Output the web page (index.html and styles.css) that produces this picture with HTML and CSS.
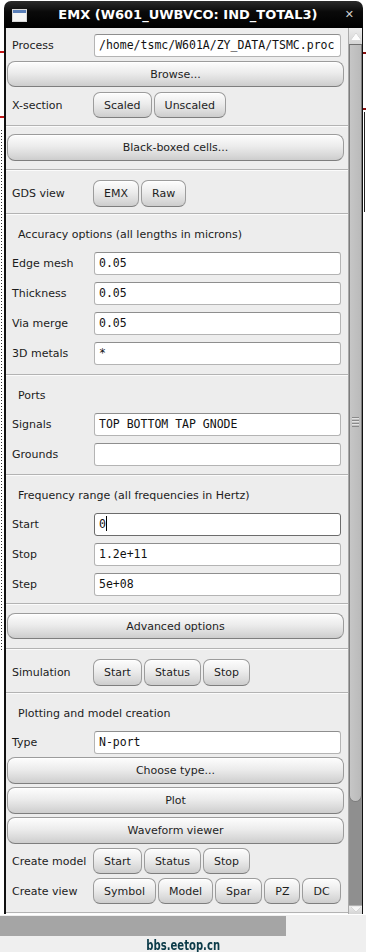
FILE: index.html
```html
<!DOCTYPE html>
<html lang="en">
<head>
    <meta charset="UTF-8">
    <meta name="viewport" content="width=device-width, initial-scale=1.0">
    <title>EMX (W601_UWBVCO: IND_TOTAL3)</title>
    <link rel="stylesheet" href="styles.css">
</head>
<body>

<div class="screen">

    <!-- EMX dialog -->
    <div class="window">
        <div class="titlebar">
            <svg class="win-icon" width="15" height="13" viewBox="0 0 15 13">
                <rect x="0.5" y="0.5" width="14" height="12" fill="#f4f4f4" stroke="#d8d8d8"/>
                <rect x="1" y="1" width="13" height="3" fill="#5a7fb8"/>
            </svg>
            <span class="title">EMX (W601_UWBVCO: IND_TOTAL3)</span>
            <span class="close">&#x2715;</span>
        </div>

        <div class="frame">
            <div class="content">

                <div class="row first">
                    <span class="label">Process</span>
                    <div class="field">/home/tsmc/W601A/ZY_DATA/TSMC.proc</div>
                </div>
                <button class="wide gap4">Browse...</button>
                <div class="row gap5">
                    <span class="label">X-section</span>
                    <div class="btns">
                        <button class="btn">Scaled</button>
                        <button class="btn">Unscaled</button>
                    </div>
                </div>

                <div class="sep s7"></div>
                <button class="wide tall gap8">Black-boxed cells...</button>
                <div class="sep s8"></div>

                <div class="row gap10">
                    <span class="label">GDS view</span>
                    <div class="btns">
                        <button class="btn tall">EMX</button>
                        <button class="btn tall">Raw</button>
                    </div>
                </div>

                <div class="sep s6"></div>
                <div class="heading">Accuracy options (all lengths in microns)</div>
                <div class="row gap7">
                    <span class="label">Edge mesh</span>
                    <div class="field">0.05</div>
                </div>
                <div class="row gap7">
                    <span class="label">Thickness</span>
                    <div class="field">0.05</div>
                </div>
                <div class="row gap7">
                    <span class="label">Via merge</span>
                    <div class="field">0.05</div>
                </div>
                <div class="row gap7">
                    <span class="label">3D metals</span>
                    <div class="field">*</div>
                </div>

                <div class="sep s9"></div>
                <div class="heading">Ports</div>
                <div class="row gap7">
                    <span class="label">Signals</span>
                    <div class="field">TOP BOTTOM TAP GNODE</div>
                </div>
                <div class="row gap7">
                    <span class="label">Grounds</span>
                    <div class="field"></div>
                </div>

                <div class="sep s8"></div>
                <div class="heading">Frequency range (all frequencies in Hertz)</div>
                <div class="row gap7">
                    <span class="label">Start</span>
                    <div class="field focused">0<span class="caret"></span></div>
                </div>
                <div class="row gap7">
                    <span class="label">Stop</span>
                    <div class="field">1.2e+11</div>
                </div>
                <div class="row gap7">
                    <span class="label">Step</span>
                    <div class="field">5e+08</div>
                </div>

                <div class="sep s7"></div>
                <button class="wide gap9">Advanced options</button>
                <div class="sep s9"></div>

                <div class="row gap10">
                    <span class="label">Simulation</span>
                    <div class="btns">
                        <button class="btn tall">Start</button>
                        <button class="btn tall">Status</button>
                        <button class="btn tall">Stop</button>
                    </div>
                </div>

                <div class="sep s6"></div>
                <div class="heading">Plotting and model creation</div>
                <div class="row gap7">
                    <span class="label">Type</span>
                    <div class="field">N-port</div>
                </div>
                <button class="wide tall gap3">Choose type...</button>
                <button class="wide tall gap3">Plot</button>
                <button class="wide tall gap3">Waveform viewer</button>

                <div class="row gap4">
                    <span class="label">Create model</span>
                    <div class="btns">
                        <button class="btn">Start</button>
                        <button class="btn">Status</button>
                        <button class="btn">Stop</button>
                    </div>
                </div>
                <div class="row gap4">
                    <span class="label">Create view</span>
                    <div class="btns">
                        <button class="btn">Symbol</button>
                        <button class="btn">Model</button>
                        <button class="btn">Spar</button>
                        <button class="btn">PZ</button>
                        <button class="btn">DC</button>
                    </div>
                </div>
                <div class="sep s8"></div>

            </div>

            <!-- Scrollbar -->
            <div class="scrollbar">
                <div class="arrow up"></div>
                <div class="track">
                    <div class="thumb">
                        <div class="grip"></div>
                    </div>
                </div>
                <div class="arrow down"></div>
            </div>
        </div>
    </div>

    <!-- Desktop strip below the dialog -->
    <div class="desktop">
        <div class="panel"></div>
        <div class="watermark"><span>bbs.eetop.cn</span></div>
    </div>

</div>

</body>
</html>
```

FILE: styles.css
```css
* {
    margin: 0;
    padding: 0;
    box-sizing: border-box;
}

body {
    width: 366px;
    height: 952px;
    overflow: hidden;
    font-family: "DejaVu Sans", Arial, sans-serif;
    font-size: 11px;
    color: #1c1c1c;
    background-color: white;
}

.screen {
    height: 952px;
    display: flex;
    flex-direction: column;
    /* bits of the windows behind the dialog */
    background:
        linear-gradient(#c41a1a, #c41a1a) 0 51px / 4px 2px no-repeat,
        linear-gradient(#c41a1a, #c41a1a) 0 116px / 4px 2px no-repeat,
        linear-gradient(#8a1010, #8a1010) 363px 52px / 3px 2px no-repeat,
        linear-gradient(#8a1010, #8a1010) 363px 108px / 3px 2px no-repeat,
        linear-gradient(#222, #222) 364px 112px / 1px 100px no-repeat,
        repeating-linear-gradient(#333 0 1px, transparent 1px 3px) 1px 130px / 1px 520px no-repeat,
        white;
}

/* Dialog window */
.window {
    margin-left: 4px;
    margin-top: 1px;
    width: 359px;
}

.titlebar {
    height: 27px;
    background: linear-gradient(#2b2b2b, #0a0a0a 40%, #000);
    border-radius: 7px 7px 0 0;
    display: flex;
    align-items: center;
    padding: 0 8px 0 8px;
    color: white;
}

.win-icon {
    flex: none;
    margin-top: 1px;
}

.title {
    flex: 1;
    text-align: center;
    font-weight: bold;
    font-size: 13px;
    padding-left: 4px;
}

.close {
    font-size: 11px;
    font-weight: bold;
    color: #d0d0d0;
    margin-right: 1px;
}

.frame {
    height: 886px;
    display: flex;
    border-left: 2px solid #111;
    border-right: 1px solid #111;
    background-color: #ededed;
}

.content {
    width: 342px;
    display: flex;
    flex-direction: column;
    overflow: hidden;
}

/* Form rows */
.row {
    display: flex;
    align-items: center;
    padding-left: 6px;
    flex: none;
}

.row.first { margin-top: 6px; }

.label {
    width: 82px;
    flex: none;
}

.field {
    width: 247px;
    height: 23px;
    background-color: white;
    border: 1px solid #b4b4b4;
    border-top-color: #8e8e8e;
    border-radius: 3px;
    padding-left: 4px;
    font-family: "DejaVu Sans Mono", "Liberation Mono", monospace;
    font-size: 11.5px;
    line-height: 21px;
    white-space: nowrap;
    overflow: hidden;
    color: #111;
}

.field.focused {
    border-color: #6c6c6c;
}

.caret {
    display: inline-block;
    width: 1px;
    height: 15px;
    background-color: #000;
    vertical-align: -3px;
}

.heading {
    flex: none;
    height: 20px;
    line-height: 20px;
    padding-left: 12px;
    margin-top: 11px;
}

.sep {
    flex: none;
    height: 2px;
    margin-bottom: -1px;
    border-top: 1px solid #b3b3b3;
    border-bottom: 1px solid #fbfbfb;
}

.s6 { margin-top: 6px; }
.s7 { margin-top: 7px; }
.s8 { margin-top: 8px; }
.s9 { margin-top: 9px; }

.gap3 { margin-top: 3px; }
.gap4 { margin-top: 4px; }
.gap5 { margin-top: 5px; }
.gap7 { margin-top: 7px; }
.gap8 { margin-top: 8px; }
.gap9 { margin-top: 9px; }
.gap10 { margin-top: 10px; }

/* Buttons */
button {
    font-family: inherit;
    font-size: 11px;
    color: #1e1e1e;
    height: 26px;
    border: 1px solid #9c9c9c;
    border-bottom-color: #7e7e7e;
    border-radius: 8px;
    background: linear-gradient(#fdfdfd, #ececec 45%, #d9d9d9 80%, #cdcdcd);
    box-shadow: inset 0 1px 0 #ffffff;
}

button.tall { height: 27px; }

.wide {
    margin-left: 1px;
    width: 337px;
    flex: none;
}

.btns {
    display: flex;
    gap: 2px;
    margin-left: -1px;
}

.btn {
    padding: 0 10px;
    border-radius: 7px;
}

/* Scrollbar */
.scrollbar {
    width: 14px;
    display: flex;
    flex-direction: column;
    background-color: #8f8f8f;
    border-left: 1px solid #a9a9a9;
}

.arrow {
    flex: none;
    background: linear-gradient(#ececec, #d4d4d4);
    display: flex;
    justify-content: center;
}

.arrow.up {
    height: 17px;
    border-bottom: 1px solid #6f6f6f;
    align-items: center;
}

.arrow.up::before {
    content: "";
    border-left: 5px solid transparent;
    border-right: 5px solid transparent;
    border-bottom: 7px solid #fdfdfd;
    filter: drop-shadow(0 0 0.5px #8a8a8a);
}

.arrow.down {
    height: 9px;
    border-top: 1px solid #b0b0b0;
}

.arrow.down::before {
    content: "";
    margin-top: 1px;
    border-left: 5px solid transparent;
    border-right: 5px solid transparent;
    border-top: 5px solid #f6f6f6;
    filter: drop-shadow(0 0 0.5px #8a8a8a);
}

.track {
    flex: 1;
}

.thumb {
    height: 757px;
    background: linear-gradient(90deg, #c6c6c6, #bababa);
    border: 1px solid #7d7d7d;
    border-top: none;
    border-radius: 0 0 7px 7px;
    display: flex;
    justify-content: center;
    padding-top: 372px;
}

.grip {
    width: 7px;
    height: 10px;
    background: repeating-linear-gradient(#8a8a8a 0 1px, #e2e2e2 1px 2px, transparent 2px 3px);
}

/* Area below the dialog */
.desktop {
    flex: 1;
    margin-top: 1px;
    background-color: #efefef;
    display: flex;
    flex-direction: column;
}

.panel {
    margin-top: 1px;
    width: 286px;
    height: 20px;
    background-color: #a5a5a5;
}

.watermark {
    text-align: center;
    margin-top: 1px;
    padding-left: 1px;
    font-family: "Liberation Sans Narrow", "DejaVu Sans Condensed", sans-serif;
    font-weight: bold;
    font-size: 14px;
    color: #0c3b49;
}

.watermark span {
    display: inline-block;
    transform: scaleX(0.8);
}
```
